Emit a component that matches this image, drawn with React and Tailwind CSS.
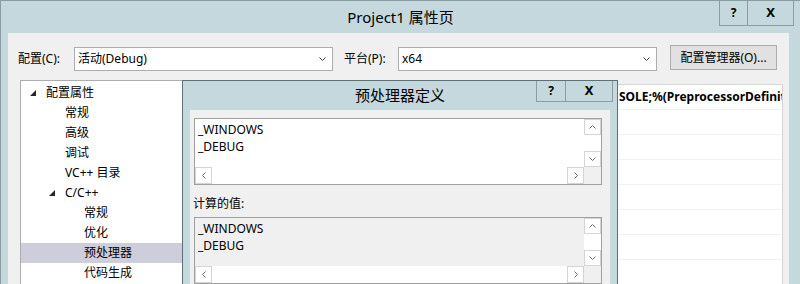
const font = "font-['Noto_Sans','Noto_Sans_CJK_SC',sans-serif]";

const Chevron = ({ dir = 'down', className = '' }) => {
    const pts = {
        down: '0.5,0.5 3.5,3.5 6.5,0.5',
        up: '0.5,3.5 3.5,0.5 6.5,3.5',
        left: '3.5,0.5 0.5,3.5 3.5,6.5',
        right: '0.5,0.5 3.5,3.5 0.5,6.5',
    };
    const vertical = dir === 'down' || dir === 'up';
    return (
        <svg
            width={vertical ? 7 : 4}
            height={vertical ? 4 : 7}
            viewBox={vertical ? '0 0 7 4' : '0 0 4 7'}
            className={className}
        >
            <polyline points={pts[dir]} fill="none" stroke="currentColor" strokeWidth="1" />
        </svg>
    );
};

const Expander = () => (
    <svg width="6" height="6" viewBox="0 0 6 6" className="shrink-0">
        <polygon points="6,0 6,6 0,6" fill="#262626" />
    </svg>
);

const Combo = ({ value, width }) => (
    <div className={`flex h-[24px] items-center justify-between border border-[#abadb3] bg-white pl-[3px] pr-[6px] ${width}`}>
        <span>{value}</span>
        <Chevron dir="down" className="text-[#3c3c3c]" />
    </div>
);

const ScrollBox = ({ lines, bg }) => (
    <div className={`ml-[4px] w-[408px] border border-[#a0a0a0] ${bg}`}>
        <div className="flex h-[48px]">
            <div className="flex-1 pl-[3px] pt-[2px] leading-[17px]">
                {lines.map((line) => (
                    <div key={line}>{line}</div>
                ))}
            </div>
            <div className="flex w-[17px] flex-col justify-between bg-white">
                <div className="flex h-[16px] items-center justify-center border border-[#d4d4d4] text-[#6a6a6a]">
                    <Chevron dir="up" />
                </div>
                <div className="flex h-[16px] items-center justify-center border border-[#d4d4d4] text-[#6a6a6a]">
                    <Chevron dir="down" />
                </div>
            </div>
        </div>
        <div className="flex h-[17px]">
            <div className="flex flex-1 justify-between bg-white">
                <div className="flex w-[17px] items-center justify-center border border-[#d4d4d4] text-[#6a6a6a]">
                    <Chevron dir="left" />
                </div>
                <div className="flex w-[17px] items-center justify-center border border-[#d4d4d4] text-[#6a6a6a]">
                    <Chevron dir="right" />
                </div>
            </div>
            <div className="w-[17px] bg-[#f0f0f0]" />
        </div>
    </div>
);

const TitleButtons = ({ help, close, height }) => (
    <div className={`flex border-x border-b border-[#8a9da3] ${height}`}>
        <div className={`flex items-center justify-center border-r border-[#8a9da3] text-[12px] font-bold ${help}`}>?</div>
        <div className={`flex items-center justify-center text-[13px] font-bold ${close}`}>X</div>
    </div>
);

const treeRows = [
    { text: '配置属性', pad: 'pl-[9px]', expander: true },
    { text: '常规', pad: 'pl-[44px]' },
    { text: '高级', pad: 'pl-[44px]' },
    { text: '调试', pad: 'pl-[44px]' },
    { text: 'VC++ 目录', pad: 'pl-[44px]' },
    { text: 'C/C++', pad: 'pl-[28px]', expander: true },
    { text: '常规', pad: 'pl-[63px]' },
    { text: '优化', pad: 'pl-[63px]' },
    { text: '预处理器', pad: 'pl-[63px]', selected: true },
    { text: '代码生成', pad: 'pl-[63px]' },
];

export default function App() {
    return (
        <div className={`relative h-[284px] w-[800px] overflow-hidden border-l border-t border-[#8a9ca1] bg-[#c4d8dd] text-[12px] text-black ${font}`}>
            <div className="flex h-[32px] items-center justify-center text-[15px]">Project1 属性页</div>
            <div className="absolute right-[6px] top-0">
                <TitleButtons height="h-[25px]" help="w-[28px]" close="w-[45px]" />
            </div>

            <div className="ml-[7px] mr-[11px] h-[260px] bg-[#f0f0f0] pl-[10px] pr-[6px] pt-[14px]">
                <div className="flex h-[24px] items-center">
                    <span className="w-[56px]">配置(C):</span>
                    <Combo value="活动(Debug)" width="w-[259px]" />
                    <span className="ml-[11px] w-[54px]">平台(P):</span>
                    <Combo value="x64" width="w-[259px]" />
                    <button className="mb-[3px] ml-[13px] h-[25px] w-[107px] border border-[#adadad] bg-[#e1e1e1] text-[12px]">
                        配置管理器(O)...
                    </button>
                </div>

                <div className="mt-[9px] flex items-start">
                    <div className="ml-[2px] h-[220px] w-[194px] border border-[#abadb3] bg-white pt-[2px]">
                        {treeRows.map((row, i) => (
                            <div
                                key={i}
                                className={`flex h-[20px] items-center gap-[10px] ${row.pad} ${row.selected ? 'bg-[#cdcddc]' : ''}`}
                            >
                                {row.expander && <Expander />}
                                <span>{row.text}</span>
                            </div>
                        ))}
                    </div>
                    <div className="ml-[4px] mt-[4px] h-[220px] flex-1 overflow-hidden border border-[#d6d6d6] bg-white">
                        <div className="flex h-[24px] items-center whitespace-nowrap pl-[400px] font-bold">
                            SOLE;%(PreprocessorDefinitions)
                        </div>
                        {[0, 1, 2, 3, 4, 5, 6].map((i) => (
                            <div key={i} className="h-[25px] border-t border-[#f3f3f3]" />
                        ))}
                    </div>
                </div>
            </div>

            <div className="absolute left-[181px] top-[79px] h-[230px] w-[436px] border border-[#5f7075] bg-[#c4d8dd]">
                <div className="flex h-[29px] items-center justify-center text-[15px]">预处理器定义</div>
                <div className="absolute right-[4px] top-0">
                    <TitleButtons height="h-[21px]" help="w-[29px]" close="w-[46px]" />
                </div>
                <div className="mx-[7px] h-[200px] bg-[#f0f0f0] pt-[8px]">
                    <ScrollBox lines={['_WINDOWS', '_DEBUG']} bg="bg-white" />
                    <div className="ml-[3px] mt-[11px] h-[16px] leading-[16px]">计算的值:</div>
                    <div className="mt-[5px]">
                        <ScrollBox lines={['_WINDOWS', '_DEBUG']} bg="bg-[#f0f0f0]" />
                    </div>
                </div>
            </div>
        </div>
    );
}
